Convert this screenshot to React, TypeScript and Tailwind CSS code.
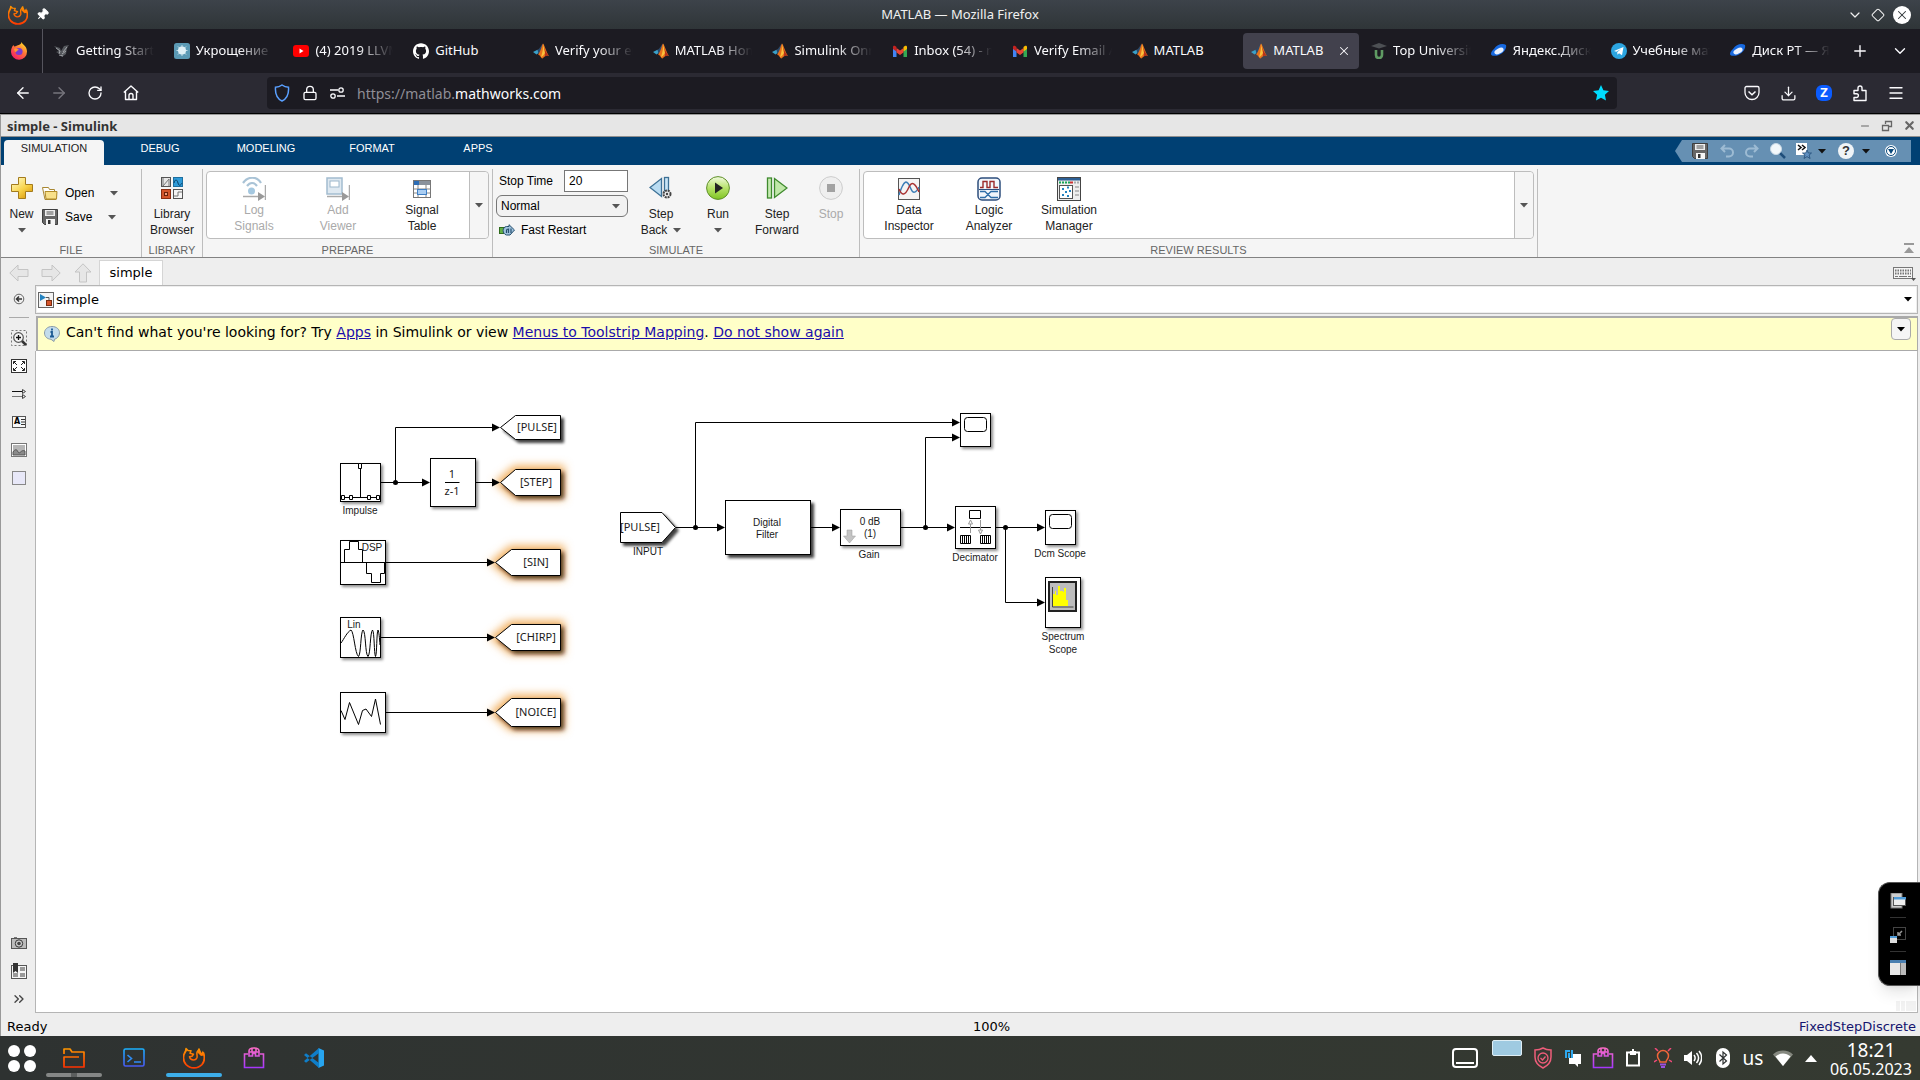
import React from "react";
import {
  ArrowLeft,
  ArrowRight,
  ChevronDown,
  ChevronsRight,
  Diamond,
  Download,
  Lock,
  Menu,
  Minus,
  Pin,
  Plus,
  RotateCw,
  Shield,
  X,
} from "lucide-react";
import { SiGithub } from "react-icons/si";

type P = { children?: React.ReactNode };

function Svg({ w, h, vb, children }: P & { w: number; h: number; vb?: string }) {
  return (
    <svg width={w} height={h} viewBox={vb ?? `0 0 ${w} ${h}`} fill="none" className="shrink-0" aria-hidden="true">
      {children}
    </svg>
  );
}

function Caret({ color = "#555" }: { color?: string }) {
  return (
    <Svg w={8} h={5}>
      <path d="M0 0h8L4 4.5z" fill={color} />
    </Svg>
  );
}

/* ---------- brand icons ---------- */

function MatlabIcon() {
  return (
    <Svg w={16} h={16}>
      <path d="M0 9l4.5-2.2L7 9 3.5 11.5z" fill="#3aa0c8" />
      <path d="M4.5 6.8C7 6 8 2 10 .5L8.500 8 5.500 11z" fill="#2c4a6b" />
      <path d="M10 .5C8.500 3 8 8 5 11.500c2 0 3 4 4.500 4 2-1 2.500-4 6.500-2.500C13.500 9.500 12 3 10 .5z" fill="#e8721c" />
      <path d="M10 .5C10.500 5 9.500 9 8 14c2.500-.5 3-3 4-4z" fill="#f9c23c" />
      <path d="M10.300 2c1.400 4 2.700 8 5.700 11-1.700-.8-3-.3-4 .5.500-4-.5-8-1.700-11.500z" fill="#b5301b" />
    </Svg>
  );
}

function FirefoxIcon() {
  return (
    <Svg w={18} h={20} vb="1 0 18 20">
      <defs>
        <linearGradient id="ffg" x1="16" y1="2" x2="4" y2="18" gradientUnits="userSpaceOnUse">
          <stop stopColor="#ffe226" />
          <stop offset=".45" stopColor="#ff7139" />
          <stop offset="1" stopColor="#f5156c" />
        </linearGradient>
      </defs>
      <path d="M12.500 1c1 3 5.500 4 5.500 9.500A8 8 0 0 1 2 11c0-3 1-5.500 2.500-7 .3 1 1 1.500 1.500 1.500C8 4 12 4.500 12.500 1z" fill="url(#ffg)" />
      <circle cx="10" cy="10.500" r="3.600" fill="#7a3bd0" />
      <path d="M5 8c2-1 4 0 5 1-2 0-2 2-4 2z" fill="#ff9a2e" />
    </Svg>
  );
}

function FoxOutline({ size }: { size: number }) {
  const id = `fox${size}`;
  return (
    <Svg w={size} h={size} vb="0 0 22 22">
      <defs>
        <linearGradient id={id} x1="11" y1="0" x2="11" y2="22" gradientUnits="userSpaceOnUse">
          <stop stopColor="#ff9a00" />
          <stop offset="1" stopColor="#ff3600" />
        </linearGradient>
      </defs>
      <path
        d="M3 3.500C0 8-.3 13.500 3 17.500c4 4.500 12 4.500 16 0 2.800-3.300 2.800-7.500 1.500-11.500"
        stroke={`url(#${id})`}
        strokeWidth="1.800"
        strokeLinecap="round"
      />
      <path
        d="M2.500 4.500L3 1.500l2 2 3 .2-1 2.500 3.500 1-1.500 2-2.500.6c.5 2 2 3.200 4 3.200s3-1 3.500-2.500c.5-1.800-.5-3 0-5 .4-1.600 1.800-2 2.200-4"
        stroke={`url(#${id})`}
        strokeWidth="1.500"
        strokeLinejoin="round"
      />
      <path d="M14.500 5.500l2-4 2 4.500 1.500-2.500 1 5-3 .5z" fill={`url(#${id})`} />
    </Svg>
  );
}

function BirdIcon() {
  return (
    <Svg w={16} h={16}>
      <path d="M0 3l6 2 1 3 3-5 5-1-2 3-1 6-4 3-2-3-4-2 3-1z" fill="#55585d" />
      <path d="M2 5l4 3-1 3M9 9l4-5M5 12l4 1M8 11l4-3" stroke="#b5b8bc" strokeWidth=".8" />
    </Svg>
  );
}

function HabrIcon() {
  return (
    <Svg w={16} h={16}>
      <rect width="16" height="16" rx="2.500" fill="#5b9ab5" />
      <circle cx="8" cy="7.500" r="4" fill="#dff0f6" />
      <path d="M8 2v11M2.500 7.500h11M4 3.500l8 8M12 3.500l-8 8" stroke="#dff0f6" strokeWidth=".8" />
    </Svg>
  );
}

function YoutubeIcon() {
  return (
    <Svg w={16} h={16}>
      <rect y="2" width="16" height="12" rx="3" fill="#f00" />
      <path d="M6.500 5.500v5l4-2.500z" fill="#fff" />
    </Svg>
  );
}

function GmailIcon() {
  return (
    <Svg w={16} h={16}>
      <path d="M1 14V4l3.500 2.500V14z" fill="#4285f4" />
      <path d="M11.500 14V6.500L15 4v10z" fill="#34a853" />
      <path d="M4.500 9.500V5L8 7.500 11.500 5v4.500L8 12z" fill="#ea4335" />
      <path d="M1 4c0-1.500 1.500-1.500 2.200-1l1.300 1v4.500L1 6z" fill="#c5221f" />
      <path d="M15 4c0-1.500-1.500-1.500-2.200-1l-1.300 1v4.500L15 6z" fill="#fbbc04" />
    </Svg>
  );
}

function UniIcon() {
  return (
    <Svg w={16} h={16}>
      <path d="M0 3l8-3 8 3-8 2.500z" fill="#4d5054" />
      <path d="M5 7v5c0 4 6 4 6 0V7" stroke="#5f9b63" strokeWidth="2.600" />
    </Svg>
  );
}

function DiskIcon() {
  return (
    <Svg w={16} h={16}>
      <path d="M3 6c3-5 9-6 12-4 1 3-2 8-7 10-4 1.500-8 1-8-1 0-2 1-3 3-5z" fill="#1769e0" />
      <ellipse cx="8" cy="8" rx="5" ry="2.600" transform="rotate(-28 8 8)" fill="#e8f1ff" />
    </Svg>
  );
}

function TelegramIcon() {
  return (
    <Svg w={16} h={16}>
      <circle cx="8" cy="8" r="8" fill="#2ca5e0" />
      <path d="M3 8l9.500-4L11 12.300 8 10.200l-1.500 1.500-.3-2.500L10 6 5.300 8.800z" fill="#fff" />
    </Svg>
  );
}

/* ---------- simulink toolstrip icons ---------- */

function SaveIcon() {
  return (
    <Svg w={16} h={16}>
      <path d="M.5.5h15v15h-13l-2-2z" fill="#666" stroke="#3f3f3f" />
      <path d="M3 1h10v6H3z" fill="#eee" />
      <path d="M4.500 3h7M4.500 5h7" stroke="#555" />
      <path d="M4 10h9v6H4z" fill="#f5f5f5" />
      <path d="M6 11h2.500v4H6z" fill="#333" />
    </Svg>
  );
}

function NewIcon() {
  return (
    <Svg w={22} h={22}>
      <defs>
        <linearGradient id="gold" x1="4" y1="2" x2="18" y2="20" gradientUnits="userSpaceOnUse">
          <stop stopColor="#fff6b8" />
          <stop offset=".55" stopColor="#f8d34a" />
          <stop offset="1" stopColor="#dc9c10" />
        </linearGradient>
      </defs>
      <path d="M7.500.5h7v7h7v7h-7v7h-7v-7h-7v-7h7z" fill="url(#gold)" stroke="#a37b1c" />
    </Svg>
  );
}

function FolderIcon() {
  return (
    <Svg w={16} h={14}>
      <path d="M.5 1.500h6l1 2h5v3h2l-.5 7h-11z" fill="#fff" stroke="#a88732" />
      <path d="M3 5.500h12l-.5 7.500H4z" fill="#f8e08a" stroke="#b18b2a" />
    </Svg>
  );
}

function LibraryIcon() {
  return (
    <Svg w={22} h={22}>
      <rect x=".5" y=".5" width="9" height="9" fill="#e6e6e6" stroke="#555" />
      <path d="M2 1v8l6-7v7" stroke="#777" />
      <rect x="12.500" y=".5" width="9" height="9" fill="#2f9bd8" stroke="#1d6fa0" />
      <path d="M13 6c1-4 3-4 4 0s3 2 4 0" stroke="#0b3f66" />
      <rect x=".5" y="12.500" width="9" height="9" fill="#d4552b" stroke="#8a2d12" />
      <rect x="3.500" y="15.500" width="3" height="3" fill="#f0a080" stroke="#6b1f08" />
      <rect x="12.500" y="12.500" width="9" height="9" fill="#f5f5f5" stroke="#555" />
      <path d="M13 19h4v-4h4" stroke="#777" />
    </Svg>
  );
}

function LogSignalsIcon() {
  return (
    <Svg w={24} h={24}>
      <path d="M1 6C6-1 15-1 19 6M5 9c3-4 7-4 10 0" stroke="#a9c3d6" strokeWidth="2.200" />
      <circle cx="9.500" cy="14" r="3.500" fill="#a5c8e0" />
      <path d="M1 19.500h16M23.500 8v15" stroke="#aaa" strokeWidth="1.500" />
      <path d="M16 15v9l7-4.500z" fill="#999" />
    </Svg>
  );
}

function AddViewerIcon() {
  return (
    <Svg w={24} h={24}>
      <rect x="1" y="1" width="15" height="16" fill="#dfe9f1" stroke="#a3bccf" strokeWidth="1.500" />
      <rect x="4" y="4" width="9" height="6" fill="#fff" stroke="#9db8cc" />
      <path d="M1 19.500h16M23.500 8v15" stroke="#aaa" strokeWidth="1.500" />
      <path d="M16 15v9l7-4.500z" fill="#999" />
    </Svg>
  );
}

function SignalTableIcon() {
  return (
    <Svg w={18} h={18}>
      <rect x=".5" y=".5" width="17" height="17" fill="#fff" stroke="#777" />
      <rect x="1" y="1" width="16" height="4" fill="#8a929c" />
      <rect x="1" y="1" width="5" height="4" fill="#2d6db5" />
      <path d="M1 9h16M1 13h16M5 5v12M13 5v12" stroke="#888" />
      <rect x="4.500" y="9.500" width="9" height="5" fill="#a9cdf2" stroke="#3f7fc4" />
    </Svg>
  );
}

function StepBackIcon() {
  return (
    <Svg w={24} h={24}>
      <path d="M12.500 2.500v18L1 11.500z" fill="#b9dcf2" stroke="#3d7196" strokeWidth="1.300" />
      <rect x="15.500" y="1.500" width="4" height="17" fill="#c9e5f7" stroke="#3d7196" strokeWidth="1.300" />
      <circle cx="18" cy="18" r="3.500" fill="#eee" stroke="#444" strokeWidth="2" strokeDasharray="2 .8" />
      <circle cx="18" cy="18" r="1.200" fill="#444" />
    </Svg>
  );
}

function RunIcon() {
  return (
    <Svg w={24} h={24}>
      <defs>
        <linearGradient id="rung" x1="12" y1="0" x2="12" y2="24" gradientUnits="userSpaceOnUse">
          <stop stopColor="#f4fbe6" />
          <stop offset=".5" stopColor="#b6e26a" />
          <stop offset="1" stopColor="#7cc21e" />
        </linearGradient>
      </defs>
      <circle cx="12" cy="12" r="11.400" fill="url(#rung)" stroke="#5f8f2a" />
      <path d="M9 6.500v11l8-5.500z" fill="#222" />
    </Svg>
  );
}

function StepForwardIcon() {
  return (
    <Svg w={22} h={24}>
      <rect x="1.500" y="2" width="4" height="20" fill="#c6ebb2" stroke="#3f8a2e" strokeWidth="1.300" />
      <path d="M8.500 2.500v19L21 12z" fill="#c0e8a8" stroke="#3f8a2e" strokeWidth="1.300" />
    </Svg>
  );
}

function StopIcon() {
  return (
    <Svg w={24} h={24}>
      <circle cx="12" cy="12" r="11.400" fill="#efefef" stroke="#ccc" />
      <rect x="8" y="8" width="8" height="8" fill="#a2a2a2" />
    </Svg>
  );
}

function FastRestartIcon() {
  return (
    <Svg w={16} h={12}>
      <rect x=".5" y="3.500" width="5" height="6" fill="#64b045" stroke="#2f6b1c" />
      <path d="M7.500 11C3 10 3 3 7.500 2.500H10V.7L15.500 6 11 11z" fill="#9fc2dd" stroke="#27506f" />
      <path d="M7.500 9V6.500C7.500 5 9 5 9.500 5v4M12 4.500V9" stroke="#27506f" strokeWidth="1.200" />
    </Svg>
  );
}

function DataInspectorIcon() {
  return (
    <Svg w={22} h={22}>
      <rect x=".5" y=".5" width="21" height="21" fill="#f4f4f4" stroke="#555" />
      <path d="M1 17C6 1 9 1 13 11c2 5 5 4 8-2" stroke="#3d7fb8" strokeWidth="1.500" />
      <path d="M1 11c3 7 6 7 10-2 3-6 6-4 10 5" stroke="#a83232" strokeWidth="1.500" />
    </Svg>
  );
}

function LogicIcon() {
  return (
    <Svg w={24} h={24}>
      <rect x="1" y="1" width="22" height="22" rx="4" fill="#f2f6fb" stroke="#2d4d7c" strokeWidth="1.500" />
      <path d="M3 10.500h3v-6h4v6h3v-6h4v6h4" stroke="#9c2b2b" strokeWidth="1.400" />
      <path d="M2 12.500h20" stroke="#2d4d7c" />
      <path d="M3 14.500h5l6 6h7M3 20.500h5l6-6h7" stroke="#2f6ea8" strokeWidth="1.300" />
    </Svg>
  );
}

function SimManagerIcon() {
  return (
    <Svg w={24} h={24}>
      <rect x=".5" y=".5" width="23" height="23" fill="#eee" stroke="#444" />
      <rect x="1" y="1" width="22" height="2.500" fill="#2d5f94" />
      <path d="M2 5.500h11" stroke="#18a558" strokeWidth="2" strokeDasharray="2 1" />
      <path d="M13 5.500h3" stroke="#c33" strokeWidth="2" />
      <path d="M17 5.500h5" stroke="#aaa" strokeWidth="2" strokeDasharray="2 1" />
      <rect x="2.500" y="8.500" width="13" height="13" fill="#fff" stroke="#555" />
      <path d="M5 12h2M10 10.500h2M8 15h2M12 14h2M5 18h2M10 19h2" stroke="#2382c0" strokeWidth="2" />
      <path d="M18 10h4M18 14h4M18 18h4" stroke="#888" />
    </Svg>
  );
}

/* ---------- browser ---------- */

const tabs: { t: string; i: React.ReactNode; fade?: boolean; active?: boolean }[] = [
  { t: "Getting Started", i: <BirdIcon />, fade: true },
  { t: "Укрощение", i: <HabrIcon />, fade: true },
  { t: "(4) 2019 LLVM", i: <YoutubeIcon />, fade: true },
  { t: "GitHub", i: <SiGithub size={16} color="#fff" /> },
  { t: "Verify your em", i: <MatlabIcon />, fade: true },
  { t: "MATLAB Home", i: <MatlabIcon />, fade: true },
  { t: "Simulink Onra", i: <MatlabIcon />, fade: true },
  { t: "Inbox (54) - ma", i: <GmailIcon />, fade: true },
  { t: "Verify Email A", i: <GmailIcon />, fade: true },
  { t: "MATLAB", i: <MatlabIcon /> },
  { t: "MATLAB", i: <MatlabIcon />, active: true },
  { t: "Top Universit", i: <UniIcon />, fade: true },
  { t: "Яндекс.Диск", i: <DiskIcon />, fade: true },
  { t: "Учебные мат", i: <TelegramIcon />, fade: true },
  { t: "Диск РТ — Ян", i: <DiskIcon />, fade: true },
];

function TitleBar() {
  return (
    <header className="flex h-[29px] items-center justify-between bg-linear-to-b from-[#3d434a] to-[#2f3538] px-2 text-[13px] text-[#f0f0f0]">
      <div className="flex w-24 items-center gap-2">
        <FoxOutline size={20} />
        <Pin size={13} fill="#fff" color="#fff" className="rotate-45" />
      </div>
      <h1>MATLAB — Mozilla Firefox</h1>
      <div className="flex w-24 items-center justify-end gap-2 pr-px">
        <button aria-label="Minimize"><ChevronDown size={16} strokeWidth={1.8} /></button>
        <button aria-label="Maximize"><Diamond size={14} strokeWidth={1.8} /></button>
        <button aria-label="Close" className="flex size-[18px] items-center justify-center rounded-full bg-white text-[#2f3538]">
          <X size={14} strokeWidth={1.8} />
        </button>
      </div>
    </header>
  );
}

function TabStrip() {
  return (
    <nav className="flex h-11 items-center bg-[#1c1b22] text-[13px] text-[#fbfbfe]">
      <button aria-label="Pinned tab" className="flex h-full w-[43px] items-center justify-center border-r border-[#55545d] pr-1">
        <FirefoxIcon />
      </button>
      <div className="flex min-w-0 flex-1 pl-[1px]">
        {tabs.map((tab, k) => (
          <div key={k} className="min-w-0 flex-1 px-[2px]">
            <div className={tab.active ? "flex h-9 items-center rounded bg-[#42414d] px-2" : "flex h-9 items-center px-2"}>
              <button className="flex min-w-0 items-center gap-1.5">
                {tab.i}
                <span
                  className={
                    tab.fade
                      ? "w-[78px] overflow-hidden whitespace-nowrap text-left [mask-image:linear-gradient(to_right,black_55%,transparent)]"
                      : "whitespace-nowrap"
                  }
                >
                  {tab.t}
                </span>
              </button>
              {tab.active && (
                <button aria-label="Close tab" className="ml-auto"><X size={14} strokeWidth={1.8} /></button>
              )}
            </div>
          </div>
        ))}
      </div>
      <button aria-label="New tab" className="flex w-10 justify-center"><Plus size={18} strokeWidth={1.8} /></button>
      <button aria-label="List tabs" className="flex w-10 justify-center"><ChevronDown size={18} strokeWidth={1.8} /></button>
    </nav>
  );
}

function NavBar() {
  return (
    <div className="flex h-[41px] items-center border-b border-black bg-[#2b2a33] text-[#fbfbfe]">
      <div className="flex w-[267px] items-center pl-[5px]">
        <button aria-label="Back" className="flex w-9 justify-center"><ArrowLeft size={18} strokeWidth={1.8} /></button>
        <button aria-label="Forward" className="flex w-9 justify-center text-[#77767e]"><ArrowRight size={18} strokeWidth={1.8} /></button>
        <button aria-label="Reload" className="flex w-9 justify-center"><RotateCw size={16} strokeWidth={2} /></button>
        <button aria-label="Home" className="flex w-9 justify-center">
          <Svg w={16} h={16}>
            <path d="M.8 7.500L8 1l7.200 6.500M2.500 6.500v8h11v-8" stroke="#fbfbfe" strokeWidth="1.400" strokeLinejoin="round" />
            <path d="M6 14.500v-4a2 2 0 0 1 4 0v4" stroke="#fbfbfe" strokeWidth="1.400" />
          </Svg>
        </button>
      </div>
      <div className="flex h-8 flex-1 items-center rounded bg-[#1c1b22] pl-[7px] pr-2 text-[14px]">
        <Svg w={16} h={18}>
          <path d="M8 1c2 1.500 4.500 2.200 6.500 2.200C15 9.500 13 14.500 8 17 3 14.500 1 9.500 1.500 3.200 3.500 3.200 6 2.500 8 1z" stroke="#5aa0ff" strokeWidth="1.500" />
        </Svg>
        <Lock size={16} strokeWidth={2} className="ml-3" />
        <span className="mx-3">
          <Svg w={15} h={12}>
            <path d="M0 3h8M7 9h8" stroke="#fbfbfe" strokeWidth="1.400" />
            <circle cx="11" cy="3" r="2.200" stroke="#fbfbfe" strokeWidth="1.300" />
            <circle cx="3" cy="9" r="2.200" stroke="#fbfbfe" strokeWidth="1.300" />
          </Svg>
        </span>
        <a href="#url" className="flex-1 text-[#fbfbfe]">
          <span className="text-[#8f8e96]">https://matlab.</span>mathworks.com
        </a>
        <button aria-label="Bookmark">
          <Svg w={16} h={16}>
            <path d="M8 0l2.400 5.200 5.600.7-4.100 3.900 1.100 5.700L8 12.700l-5 2.800 1.100-5.700L0 5.900l5.600-.7z" fill="#00ddff" />
          </Svg>
        </button>
      </div>
      <div className="flex w-[303px] items-center justify-end pr-1.5">
        <button aria-label="Pocket" className="flex w-9 justify-center">
          <Svg w={16} h={16}>
            <path d="M1 3c0-1 .7-1.500 1.500-1.500h11c.8 0 1.500.5 1.500 1.500v4.500a7 7 0 0 1-14 0z" stroke="#fbfbfe" strokeWidth="1.300" />
            <path d="M4.500 6.500L8 9.800l3.500-3.300" stroke="#fbfbfe" strokeWidth="1.500" />
          </Svg>
        </button>
        <button aria-label="Downloads" className="flex w-9 justify-center"><Download size={17} strokeWidth={1.8} /></button>
        <button aria-label="Zotero" className="flex w-9 justify-center">
          <span className="flex size-4 items-center justify-center rounded-md bg-[#0b5cff] text-[13px] font-bold">Z</span>
        </button>
        <button aria-label="Extensions" className="flex w-9 justify-center">
          <Svg w={16} h={17}>
            <path
              d="M2 8V5.500h4V3a2 2 0 0 1 4 0v2.500h4v10H2v-3h2.500a1.800 1.800 0 0 0 0-3.800H2z"
              stroke="#fbfbfe"
              strokeWidth="1.400"
              strokeLinejoin="round"
            />
          </Svg>
        </button>
        <button aria-label="Menu" className="flex w-9 justify-center"><Menu size={18} strokeWidth={1.8} /></button>
      </div>
    </div>
  );
}

/* ---------- toolstrip ---------- */

function Section({ title, className, children }: P & { title: string; className: string }) {
  return (
    <section className={`flex flex-col pt-1 ${className}`}>
      <div className="flex h-[73px] border-r border-[#bdbdbd]">{children}</div>
      <h3 className="h-[15px] border-r border-[#bdbdbd] text-center text-[11px] leading-4 text-[#666]">{title}</h3>
    </section>
  );
}

function GalleryItem({ icon, a, b, disabled, w }: { icon: React.ReactNode; a: string; b: string; disabled?: boolean; w: string }) {
  return (
    <button disabled={disabled} className={`flex flex-col items-center pt-1 ${w} ${disabled ? "text-[#aaa]" : "text-[#222]"}`}>
      <span className="flex h-[26px] items-center justify-center">{icon}</span>
      <span className="leading-4">{a}</span>
      <span className="leading-4">{b}</span>
    </button>
  );
}

function BigButton({ icon, a, b, disabled, w }: { icon: React.ReactNode; a: string; b?: React.ReactNode; disabled?: boolean; w: string }) {
  return (
    <button disabled={disabled} className={`flex flex-col items-center pt-[7px] ${w} ${disabled ? "text-[#aaa]" : "text-[#222]"}`}>
      <span className="mb-1.5 flex h-6 items-center">{icon}</span>
      <span className="leading-4">{a}</span>
      <span className="flex h-4 items-center gap-1.5 leading-4">{b}</span>
    </button>
  );
}

function QuickAccess() {
  return (
    <div className="mr-[9px] mt-[3px] flex h-[22px] w-[236px] items-center bg-[#6690b3] pl-[17px] [clip-path:polygon(7px_0,100%_0,100%_100%,7px_100%,0_50%)]">
      <button aria-label="Save"><SaveIcon /></button>
      <button aria-label="Undo" className="ml-3">
        <Svg w={14} h={14}>
          <path d="M5 1L1.500 4.500 5 8M2 4.500h7a3.500 3.500 0 0 1 0 8H6" stroke="#9dbbd3" strokeWidth="2" />
        </Svg>
      </button>
      <button aria-label="Redo" className="ml-[11px]">
        <Svg w={14} h={14}>
          <path d="M9 1l3.500 3.500L9 8M12 4.500H5a3.500 3.500 0 0 0 0 8h3" stroke="#9dbbd3" strokeWidth="2" />
        </Svg>
      </button>
      <button aria-label="Search" className="ml-[11px]">
        <Svg w={16} h={16}>
          <path d="M9 9l6 6" stroke="#1f4e7a" strokeWidth="2.500" />
          <circle cx="6" cy="6" r="5.500" fill="#f3f8fb" stroke="#c9d9e6" />
        </Svg>
      </button>
      <button aria-label="Favorites" className="ml-2.5 flex items-center gap-1.5">
        <Svg w={16} h={16}>
          <rect width="11" height="12" fill="#fff" />
          <path d="M2 2l3 2.500L2 7M6 2l3 2.500L6 7" stroke="#111" strokeWidth="1.500" />
          <path d="M11 7l1.300 3H15.500l-2.400 2 1 3.500L11 13.600 8 15.500l1-3.500-2.500-2h3.200z" fill="#5f8fc0" stroke="#234e78" strokeWidth=".8" />
        </Svg>
        <Caret color="#111" />
      </button>
      <button aria-label="Help" className="ml-3 flex items-center gap-2">
        <span className="flex size-4 items-center justify-center rounded-full bg-[#f0f4f7] text-[13px] font-bold text-[#333]">?</span>
        <Caret color="#111" />
      </button>
      <button aria-label="Minimize toolstrip" className="ml-[15px]">
        <Svg w={12} h={12}>
          <circle cx="6" cy="6" r="6" fill="#fff" />
          <circle cx="6" cy="6" r="4.500" fill="#fff" stroke="#0b4a7c" strokeWidth="1" />
          <path d="M3 4h6L6 9z" fill="#0b4a7c" />
        </Svg>
      </button>
    </div>
  );
}

function Toolstrip() {
  return (
    <div className="text-[12px]">
      <div className="flex h-7 items-start justify-between bg-[#004073]">
        <div role="tablist" className="flex pl-[3px] text-[11px]">
          <button role="tab" className="mr-[3px] mt-[3px] h-[25px] w-[100px] rounded-t-sm bg-[#f5f5f5] pb-2 text-[#222]">SIMULATION</button>
          {["DEBUG", "MODELING", "FORMAT", "APPS"].map((t) => (
            <button role="tab" key={t} className="mt-[3px] h-[25px] w-[106px] pb-2 text-white">
              {t}
            </button>
          ))}
        </div>
        <QuickAccess />
      </div>
      <div className="flex h-[93px] border-b border-[#828282] bg-[#f5f5f5]">
        <Section title="FILE" className="w-[141px]">
          <BigButton icon={<NewIcon />} a="New" b={<Caret />} w="w-[41px]" />
          <div className="flex flex-col pt-3">
            <button className="flex h-6 items-center"><span className="w-[23px]"><FolderIcon /></span><span className="w-[45px] text-left">Open</span><Caret /></button>
            <button className="flex h-6 items-center"><span className="w-[23px]"><SaveIcon /></span><span className="w-[43px] text-left">Save</span><Caret /></button>
          </div>
        </Section>
        <Section title="LIBRARY" className="w-[61px]">
          <BigButton icon={<LibraryIcon />} a="Library" b="Browser" w="w-full" />
        </Section>
        <Section title="PREPARE" className="w-[290px]">
          <div className="mx-[3px] mt-0.5 flex h-[68px] flex-1 rounded border border-[#bdbdbd] bg-white pl-[5px]">
            <GalleryItem icon={<LogSignalsIcon />} a="Log" b="Signals" disabled w="w-[84px]" />
            <GalleryItem icon={<AddViewerIcon />} a="Add" b="Viewer" disabled w="w-[84px]" />
            <GalleryItem icon={<SignalTableIcon />} a="Signal" b="Table" w="w-[84px]" />
            <button aria-label="More prepare tools" className="ml-auto flex w-[19px] items-center justify-center rounded-r border-l border-[#bdbdbd] bg-[#f5f5f5]"><Caret /></button>
          </div>
        </Section>
        <Section title="SIMULATE" className="w-[367px]">
          <div className="flex w-[135px] flex-col pl-[3px] pt-[1px]">
            <div className="flex items-center justify-between">
              <label htmlFor="stop" className="pl-[3px]">Stop Time</label>
              <input id="stop" defaultValue="20" className="h-[22px] w-16 border border-[#777] bg-white px-1 outline-none" />
            </div>
            <div className="relative mt-[3px]">
              <select aria-label="Simulation mode" className="h-[22px] w-full appearance-none rounded-md border border-[#777] bg-[#f2f2f2] px-1">
                <option>Normal</option>
              </select>
              <span className="pointer-events-none absolute right-2 top-[9px]"><Caret /></span>
            </div>
            <button className="mt-1 flex h-[18px] items-center gap-1.5 pl-[3px]"><FastRestartIcon />Fast Restart</button>
          </div>
          <BigButton icon={<StepBackIcon />} a="Step" b={<>Back<Caret /></>} w="w-[66px]" />
          <BigButton icon={<RunIcon />} a="Run" b={<Caret />} w="w-12" />
          <BigButton icon={<StepForwardIcon />} a="Step" b="Forward" w="w-[70px]" />
          <BigButton icon={<StopIcon />} a="Stop" disabled w="w-[38px]" />
        </Section>
        <Section title="REVIEW RESULTS" className="w-[678px]">
          <div className="mx-[3px] mt-0.5 flex h-[68px] flex-1 rounded border border-[#bdbdbd] bg-white pl-[5px]">
            <GalleryItem icon={<DataInspectorIcon />} a="Data" b="Inspector" w="w-20" />
            <GalleryItem icon={<LogicIcon />} a="Logic" b="Analyzer" w="w-20" />
            <GalleryItem icon={<SimManagerIcon />} a="Simulation" b="Manager" w="w-20" />
            <button aria-label="More result tools" className="ml-auto flex w-[19px] items-center justify-center rounded-r border-l border-[#bdbdbd] bg-[#f5f5f5]"><Caret /></button>
          </div>
        </Section>
        <div className="flex flex-1 items-end justify-end pb-1 pr-1.5">
          <button aria-label="Collapse toolstrip">
            <Svg w={10} h={10}>
              <path d="M0 1h10" stroke="#999" strokeWidth="2" />
              <path d="M0 10h10L5 4z" fill="#999" />
            </Svg>
          </button>
        </div>
      </div>
    </div>
  );
}

/* ---------- block diagram ---------- */

function Arrow({ x, y }: { x: number; y: number }) {
  return <path d={`M${x} ${y}l-8-4v8z`} fill="#000" />;
}

function Block({ x, y, w, h }: { x: number; y: number; w: number; h: number }) {
  return <rect x={x} y={y} width={w} height={h} fill="#fff" stroke="#000" filter="url(#shadow)" />;
}

function GotoTag({ x, y, h, label, glow }: { x: number; y: number; h: number; label: string; glow?: boolean }) {
  const s = x > 498 ? 15 : 16;
  const d = `M${x} ${y + h / 2}L${x + s} ${y}H560.500V${y + h}H${x + s}z`;
  return (
    <g>
      {glow && <path d={d} fill="#f2b060" stroke="#f2b060" strokeWidth="8" filter="url(#glow)" />}
      <path d={d} fill="#fff" stroke="#000" filter={glow ? "url(#shadow3)" : "url(#shadow2)"} />
      <text
        x={label === "[PULSE]" ? 537 : 536}
        y={Math.round(y + h / 2 + 3)}
        fill="#1a1a1a"
        textAnchor="middle"
        className="[font-family:'Noto_Sans',sans-serif] text-[11px]"
      >
        {label}
      </text>
    </g>
  );
}

function ScopeFace({ x, y, h }: { x: number; y: number; h: number }) {
  return (
    <g>
      <Block x={x} y={y} w={30} h={h} />
      <rect x={x + 4} y={y + 4} width="22" height="14" rx="3" stroke="#000" fill="#fff" />
    </g>
  );
}

function Diagram() {
  return (
    <svg width="1100" height="440" viewBox="36 351 1100 440" fill="none" role="img" aria-label="Block diagram" className="[font-family:'Liberation_Sans',sans-serif] text-[10px]">
      <defs>
        <filter id="shadow" x="-30%" y="-30%" width="160%" height="160%">
          <feDropShadow dx="2" dy="2" stdDeviation="1.500" floodColor="#000" floodOpacity=".45" />
        </filter>
        <filter id="shadow2" x="-30%" y="-50%" width="160%" height="200%">
          <feDropShadow dx="3" dy="3" stdDeviation="1.500" floodColor="#000" floodOpacity=".75" />
        </filter>
        <filter id="shadow3" x="-30%" y="-50%" width="160%" height="200%">
          <feDropShadow dx="3" dy="3" stdDeviation="2" floodColor="#2a1500" floodOpacity=".75" />
        </filter>
        <filter id="glow" x="-30%" y="-60%" width="160%" height="220%">
          <feGaussianBlur stdDeviation="4" />
        </filter>
      </defs>

      <GotoTag x={500.5} y={415.5} h={24} label="[PULSE]" />
      <GotoTag x={500.5} y={469.5} h={26} label="[STEP]" glow />
      <GotoTag x={495.5} y={549.5} h={26} label="[SIN]" glow />
      <GotoTag x={495.5} y={624.5} h={26} label="[CHIRP]" glow />
      <GotoTag x={495.5} y={698.5} h={28} label="[NOICE]" glow />

      <g stroke="#000">
        <path d="M381 482.500h43M395.500 482.500v-55H494M476 482.500h18M386 562.500h104M381 637.500h109M386 712.500h104" />
        <path d="M676 527.500h43M695.500 527.500v-105H954M811 527.500h22M901 527.500h48M925.500 527.500v-90H954M996 527.500h43M1005.500 527.500v75H1039" />
      </g>
      <g fill="#000">
        <circle cx="395.500" cy="482.500" r="2.500" />
        <circle cx="695.500" cy="527.500" r="2.500" />
        <circle cx="925.500" cy="527.500" r="2.500" />
        <circle cx="1005.500" cy="527.500" r="2.500" />
      </g>
      <Arrow x={430} y={482.5} />
      <Arrow x={500} y={427.5} />
      <Arrow x={500} y={482.5} />
      <Arrow x={495} y={562.5} />
      <Arrow x={495} y={637.5} />
      <Arrow x={495} y={712.5} />
      <Arrow x={725} y={527.5} />
      <Arrow x={840} y={527.5} />
      <Arrow x={955} y={527.5} />
      <Arrow x={960} y={422.5} />
      <Arrow x={960} y={437.5} />
      <Arrow x={1045} y={527.5} />
      <Arrow x={1045} y={602.5} />

      <Block x={340.5} y={463.5} w={40} h={38} />
      <path d="M360.500 468v29.500M345 497.500h31" stroke="#000" />
      <path d="M358.500 463.500h3v5h-3zM341.500 495.500h3v4h-3zM349.500 495.500h3v4h-3zM367.500 495.500h3v4h-3zM376.500 495.500h3v4h-3z" stroke="#000" fill="#fff" />
      <Block x={430.5} y={458.5} w={45} h={48} />
      <path d="M445 482.500h14.500" stroke="#000" />
      <Block x={340.5} y={540.5} w={45} h={44} />
      <path d="M341 562.500h44M344.500 562.500v-13h5v-8h9v8h4v13M366.500 562.500v11h5v9h9v-9h4v-11" stroke="#000" />
      <Block x={340.5} y={617.5} w={40} h={40} />
      <path d="M341 643c3-4 6-11 10-13 3 2 4 24 7.500 26.500 2.500-2 2-24 4.500-26.500 3 2 2 24 5 26.500 2.500-2 2-24 4.500-26.500 2 2 1.500 24 3 26.500 1.500-2 1-24 2.500-26.500 1 2 1.500 8 2 15" stroke="#000" />
      <Block x={340.5} y={692.5} w={45} h={40} />
      <path d="M341 710.500l4 9 4.500-17 9 22 4-14 3.500-1.500 5.500 7.500 4-17.500 5 25.500" stroke="#000" />

      <path d="M620.500 512.500H662l13.500 15-13.500 15h-41.500z" fill="#fff" stroke="#000" filter="url(#shadow2)" />
      <rect x="725.500" y="500.500" width="85" height="54" fill="#fff" stroke="#000" filter="url(#shadow2)" />
      <Block x={840.5} y={509.5} w={60} h={36} />
      <path d="M847 530h5v6h3.500l-6 7-6-7h3.500z" fill="#c4c4c4" stroke="#999" strokeWidth=".5" />
      <Block x={955.5} y={506.5} w={40} h={42} />
      <path d="M969.500 510.500h11v8h-11zM960 527.500h31" stroke="#000" />
      <path d="M960.500 535.500h10v8h-10zM980.500 535.500h10v8h-10zM962.500 535.500v8M964.500 535.500v8M966.500 535.500v8M968.500 535.500v8M982.500 535.500v8M984.500 535.500v8M986.500 535.500v8M988.500 535.500v8" stroke="#000" />
      <path d="M970.500 533v-9M968.500 524l2-4 2 4zM980.500 520v10M978.500 530l2 4 2-4z" stroke="#999" />
      <ScopeFace x={960.5} y={413.5} h={33} />
      <ScopeFace x={1045.5} y={510.5} h={34} />
      <Block x={1045.5} y={577.5} w={35} h={50} />
      <rect x="1049" y="582" width="27" height="29" fill="#bdbdbd" stroke="#222" strokeWidth="2" />
      <path d="M1053 606v-12h2v-3h1v4h2v-9h2v5h3v1h1v-4h2v12h2v6z" fill="#ff0" />
      <path d="M1052.500 587v20h21" stroke="#444" />

      <g fill="#1a1a1a" textAnchor="middle">
        <g className="[font-family:'Noto_Sans',sans-serif] text-[11px]">
          <text x="640" y="531">[PULSE]</text>
          <text x="452" y="478">1</text>
          <text x="452" y="495">z-1</text>
        </g>
        <text x="360" y="514">Impulse</text>
        <text x="372" y="551">DSP</text>
        <text x="354" y="628">Lin</text>
        <text x="648" y="555">INPUT</text>
        <text x="767" y="526">Digital</text>
        <text x="767" y="538">Filter</text>
        <text x="870" y="525">0 dB</text>
        <text x="870" y="537">(1)</text>
        <text x="869" y="558">Gain</text>
        <text x="975" y="561">Decimator</text>
        <text x="1060" y="557">Dcm Scope</text>
        <text x="1063" y="640">Spectrum</text>
        <text x="1063" y="653">Scope</text>
      </g>
    </svg>
  );
}

/* ---------- editor ---------- */

function NavArrow({ label, rotate }: { label: string; rotate: string }) {
  return (
    <button aria-label={label} className={rotate}>
      <Svg w={20} h={18}>
        <path d="M.8 9L9 1v4.500h10v7H9V17z" fill="#e6e6e6" stroke="#c4c4c4" />
      </Svg>
    </button>
  );
}

function PaletteButton({ label, children }: P & { label: string }) {
  return (
    <button aria-label={label} className="flex h-7 w-full items-center justify-center">
      {children}
    </button>
  );
}

function Palette() {
  return (
    <aside className="flex w-[34px] flex-col pl-0.5">
      <PaletteButton label="Hide browser">
        <Svg w={12} h={12}>
          <circle cx="6" cy="6" r="4.800" stroke="#666" />
          <path d="M9 6H4M6 3.500L3.500 6 6 8.500" stroke="#333" strokeWidth="1.500" />
        </Svg>
      </PaletteButton>
      <div className="mx-1.5 mb-1.5 mt-1 h-px bg-[#aaa]" />
      <PaletteButton label="Zoom">
        <Svg w={16} h={16}>
          <rect x=".5" y=".5" width="15" height="15" stroke="#777" strokeDasharray="2 2" />
          <path d="M10 10l5 5" stroke="#333" strokeWidth="2.500" />
          <circle cx="7.500" cy="7.500" r="4.800" fill="#f5f5f5" stroke="#555" strokeWidth="1.200" />
          <path d="M7.500 5v5M5 7.500h5" stroke="#111" strokeWidth="1.300" />
        </Svg>
      </PaletteButton>
      <PaletteButton label="Fit to view">
        <Svg w={16} h={14}>
          <rect x=".5" y=".5" width="15" height="13" fill="#fff" stroke="#333" />
          <path d="M2.500 5V2.500H5M3 3l3 3M11 2.500h2.500V5M13 3l-3 3M2.500 9v2.500H5M3 11l3-3M11 11.500h2.500V9M13 11l-3-3" stroke="#222" />
        </Svg>
      </PaletteButton>
      <PaletteButton label="Signal lines">
        <Svg w={14} h={10}>
          <path d="M0 2.500h11" stroke="#111" />
          <path d="M0 7.500h11" stroke="#777" />
          <path d="M10.500.5l3 2-3 2zM10.500 5.500l3 2-3 2z" stroke="#444" />
        </Svg>
      </PaletteButton>
      <PaletteButton label="Annotation">
        <span className="flex h-3 w-3.5 items-center gap-px border border-[#555] bg-[#f8f8f8] px-px text-[8px] font-bold leading-none text-black">
          A
          <Svg w={4} h={6}>
            <path d="M0 .5h4M0 3h4M0 5.500h4" stroke="#333" />
          </Svg>
        </span>
      </PaletteButton>
      <PaletteButton label="Image">
        <Svg w={16} h={14}>
          <rect x=".5" y=".5" width="15" height="13" fill="#fff" stroke="#777" />
          <rect x="2" y="2" width="12" height="10" fill="#b5b5b5" />
          <path d="M2 9c2-3 4-3 5 0 2 3 3-3 7-1v4H2z" fill="#8a8a8a" stroke="#555" />
        </Svg>
      </PaletteButton>
      <PaletteButton label="Area">
        <span className="size-3.5 border border-[#888] bg-[#e8e8f8]" />
      </PaletteButton>
      <div className="flex-1" />
      <PaletteButton label="Screenshot">
        <Svg w={16} h={12}>
          <path d="M3 0h3v2H3z" fill="#777" />
          <rect x=".5" y="1.500" width="15" height="10" fill="#bbb" stroke="#555" />
          <circle cx="8" cy="6.500" r="3.700" fill="#ccc" stroke="#333" />
          <circle cx="8" cy="6.500" r="1.800" fill="#444" />
        </Svg>
      </PaletteButton>
      <PaletteButton label="Bookmarks">
        <Svg w={16} h={16}>
          <rect x=".5" y="2.500" width="15" height="13" fill="#f5f5f5" stroke="#555" />
          <path d="M9 4h5v4H9zM9 10h5v4H9zM2 10h5v4H2z" fill="#999" />
          <path d="M2 0h5v10L4.500 8 2 10z" fill="#333" />
        </Svg>
      </PaletteButton>
      <PaletteButton label="More"><ChevronsRight size={16} strokeWidth={2} color="#444" /></PaletteButton>
    </aside>
  );
}

function FloatingPanel() {
  return (
    <div className="absolute bottom-[26px] right-[-3px] flex h-[104px] w-[42px] flex-col items-center justify-between rounded-l-xl border border-r-0 border-[#555] bg-black py-2.5 pr-1 shadow-lg">
      <button aria-label="Cascade windows">
        <Svg w={16} h={16}>
          <rect x="1" y="0" width="11" height="15" fill="#ccc" stroke="#777" />
          <rect x="3.500" y="4.500" width="12" height="8" fill="#eee" stroke="#555" />
          <rect x="4" y="4" width="12" height="2.500" fill="#4f9bd8" />
        </Svg>
      </button>
      <div className="h-px w-4 bg-[#333]" />
      <button aria-label="Dock window">
        <Svg w={16} h={16}>
          <rect x="3.500" y=".5" width="12" height="12" stroke="#888" strokeDasharray="1 1" />
          <path d="M12 4L8 8M8 5v3h3" stroke="#999" strokeWidth="1.500" />
          <rect x="0" y="9" width="7" height="7" fill="#ddd" />
          <rect x="0" y="9" width="7" height="2" fill="#4f9bd8" />
        </Svg>
      </button>
      <div className="h-px w-4 bg-[#333]" />
      <button aria-label="Tile windows">
        <Svg w={16} h={15}>
          <rect width="16" height="15" fill="#e8e8e8" />
          <rect width="16" height="3" fill="#4a7fb0" />
          <path d="M10.500 3v12" stroke="#777" />
          <rect x="11" y="3" width="5" height="12" fill="#bbb" />
        </Svg>
      </button>
    </div>
  );
}

function Editor() {
  return (
    <div className="flex min-h-0 flex-1 flex-col bg-[#eee] text-[13px] text-black [font-family:'DejaVu_Sans',sans-serif]">
      <div className="flex h-[27px] items-center justify-between pr-1">
        <div className="flex h-full items-center pl-2 pt-0.5">
          <div className="flex gap-3 pr-1.5">
            <NavArrow label="Back" rotate="" />
            <NavArrow label="Forward" rotate="rotate-180" />
            <NavArrow label="Up" rotate="rotate-90" />
          </div>
          <button className="h-[25px] w-16 border border-b-0 border-[#d5d5d5] bg-white">simple</button>
        </div>
        <button aria-label="Keyboard shortcuts" className="flex items-end pt-1">
          <Svg w={23} h={14}>
            <rect x=".5" y=".5" width="19" height="11" fill="#f4f4f4" stroke="#777" />
            <path d="M2 3.500h16M2 6.500h16" stroke="#777" strokeWidth="2" strokeDasharray="1.500 1" />
            <path d="M2 9.500h3M6 9.500h8M15 9.500h3" stroke="#777" />
            <path d="M18 11h5l-2.500 3z" fill="#555" />
          </Svg>
        </button>
      </div>
      <div className="flex min-h-0 flex-1">
        <Palette />
        <div className="flex min-w-0 flex-1 flex-col pr-0.5">
          <div className="mb-0.5 flex h-[29px] items-center border-2 border-[#eee] bg-white pl-px pr-1 outline-1 -outline-offset-1 outline-[#b5b5b5]">
            <Svg w={16} h={16}>
              <rect x=".5" y=".5" width="15" height="15" fill="#f4f4f4" stroke="#666" />
              <path d="M2 2l6 3.500L2 9z" fill="#2382c0" />
              <path d="M8 5.500h3V8" stroke="#555" />
              <rect x="8.500" y="8.500" width="5" height="5" fill="#d4552b" stroke="#7a2b10" />
            </Svg>
            <span className="flex-1 pl-0.5">simple</span>
            <button aria-label="Path list"><Caret color="#000" /></button>
          </div>
          <div className="ml-px flex h-[35px] items-start border border-l-2 border-t-2 border-[#aaa] bg-[#ffffc8] pl-1.5 pr-1.5 text-[14px]">
            <span className="pt-2">
              <Svg w={16} h={16}>
                <path d="M8 .5c4.500 0 7.500 2.700 7.500 6.300S12.500 13 10.500 13.200L10 15.500 7 13.300C3 13 .5 10.500.5 7S3.500.5 8 .5z" fill="#c3dcec" stroke="#8a9ba8" />
                <path d="M8 2.500v2M6.500 6H8v4.500M6 10.500h4" stroke="#1c5a94" strokeWidth="1.800" />
              </Svg>
            </span>
            <p className="flex-1 pl-1.5 pt-1 leading-5">
              Can't find what you're looking for? Try <a href="#apps" className="text-[#1a0dab] underline">Apps</a> in Simulink or view{" "}
              <a href="#menus" className="text-[#1a0dab] underline">Menus to Toolstrip Mapping</a>. <a href="#hide" className="text-[#1a0dab] underline">Do not show again</a>
            </p>
            <button aria-label="Notification options" className="flex h-[22px] w-5 items-center justify-center rounded-sm border border-[#aaa] bg-[#f5f5f5]"><Caret color="#000" /></button>
          </div>
          <main className="relative min-h-0 flex-1 border border-t-0 border-[#b5b5b5] bg-white">
            <Diagram />
            <div className="absolute bottom-px right-px flex gap-px">
              <span className="h-2.5 w-1 bg-[#f2f2f2]" />
              <span className="h-2.5 w-1 bg-[#f2f2f2]" />
              <span className="h-2.5 w-2.5 bg-[#f2f2f2]" />
            </div>
            <FloatingPanel />
          </main>
        </div>
      </div>
      <footer className="grid h-[23px] grid-cols-3 items-center pl-1.5 pr-1 pt-1">
        <span>Ready</span>
        <span className="pl-15 text-center">100%</span>
        <span className="text-right text-[#14146e]">FixedStepDiscrete</span>
      </footer>
    </div>
  );
}

/* ---------- desktop panel ---------- */

function BagIcon({ id }: { id: string }) {
  return (
    <Svg w={22} h={22}>
      <defs>
        <linearGradient id={id} x1="11" y1="0" x2="11" y2="22" gradientUnits="userSpaceOnUse">
          <stop stopColor="#ff6ec4" />
          <stop offset="1" stopColor="#a033ff" />
        </linearGradient>
      </defs>
      <path d="M5 7H1.500v13.500h19V7H17M6 9V4c0-4 10-4 10 0v5h-3.500V6.500h-3V9zM6 5h10M9 1.500V5M13 1.500V5" stroke={`url(#${id})`} strokeWidth="1.600" />
    </Svg>
  );
}

function Task({ label, bar, children }: P & { label: string; bar: string }) {
  return (
    <button aria-label={label} className="flex h-full w-14 flex-col items-center">
      <span className="flex flex-1 items-center pt-1.5">{children}</span>
      <span className={`mb-[3px] h-1 w-full rounded-full ${bar}`} />
    </button>
  );
}

function Tray({ label, children }: P & { label: string }) {
  return (
    <button aria-label={label} className="flex w-[30px] justify-center">
      {children}
    </button>
  );
}

function Taskbar() {
  return (
    <div className="flex h-11 items-center justify-between bg-linear-to-r from-[#2e3231] to-[#353a31] pl-2 text-white">
      <div className="flex h-full items-center gap-1">
        <button aria-label="Applications" className="mr-1.5 grid grid-cols-2 gap-x-1 gap-y-[3px]">
          <span className="size-3 rounded-full bg-white" />
          <span className="size-3 rounded-full bg-white" />
          <span className="size-3 rounded-full bg-white" />
          <span className="size-3 rounded-full bg-white" />
        </button>
        <Task label="Files" bar="bg-[linear-gradient(to_right,#858786_45%,#5c5f5e_45%,#5c5f5e_55%,#858786_55%)]">
          <Svg w={22} h={20}>
            <defs>
              <linearGradient id="fold" x1="11" y1="0" x2="11" y2="20" gradientUnits="userSpaceOnUse">
                <stop stopColor="#ff9a00" />
                <stop offset="1" stopColor="#ff2d00" />
              </linearGradient>
            </defs>
            <path d="M1 6V1h6l2 3h12v15H1V9h15" stroke="url(#fold)" strokeWidth="1.700" strokeLinejoin="round" />
          </Svg>
        </Task>
        <Task label="Terminal" bar="bg-transparent">
          <Svg w={22} h={20}>
            <defs>
              <linearGradient id="term" x1="11" y1="0" x2="11" y2="20" gradientUnits="userSpaceOnUse">
                <stop stopColor="#18b4ff" />
                <stop offset="1" stopColor="#4b52f0" />
              </linearGradient>
            </defs>
            <rect x="1" y="1" width="20" height="17" rx="1.500" stroke="url(#term)" strokeWidth="1.600" />
            <path d="M4.500 7l4 3.500-4 3.500M11 14h7" stroke="#2f8df5" strokeWidth="1.600" />
          </Svg>
        </Task>
        <Task label="Firefox" bar="bg-[#3daee9]"><FoxOutline size={22} /></Task>
        <Task label="Store" bar="bg-transparent"><BagIcon id="bag1" /></Task>
        <Task label="Code editor" bar="bg-transparent">
          <Svg w={20} h={20}>
            <path d="M14.500 0L20 2.500v15L14.500 20z" fill="#27a5f0" />
            <path d="M0 7l2-1.800L15 15v5zM0 13l2 1.800L15 5V0z" fill="#0f7ec9" />
          </Svg>
        </Task>
      </div>
      <div className="flex h-full items-center">
        <button aria-label="Show desktop" className="mr-3.5">
          <Svg w={26} h={20}>
            <rect x="1" y="1" width="24" height="18" rx="3" stroke="#fff" strokeWidth="2" />
            <path d="M4 15h18" stroke="#fff" strokeWidth="2" />
          </Svg>
        </button>
        <button aria-label="Pager" className="mb-5 mr-1.5 h-4 w-[30px] rounded-[2px] border border-[#dfeef5] bg-[#9fcae1]" />
        <Tray label="Security">
          <Svg w={18} h={22}>
            <path d="M9 1c3 1.800 5 2 8 2v7c0 5-3 8.500-8 11-5-2.500-8-6-8-11V3c3 0 5-.2 8-2z" stroke="#ee5d7a" strokeWidth="1.500" />
            <circle cx="9" cy="11" r="5" stroke="#ee5d7a" strokeWidth="1.300" />
            <path d="M6.500 11l2 2 3-3.500" stroke="#ee5d7a" strokeWidth="1.300" />
          </Svg>
        </Tray>
        <Tray label="Updates">
          <Svg w={16} h={17}>
            <path d="M4 4h12v10h-3v3l-3-3H4z" fill="#fff" />
            <path d="M0 0h8v8H0z" fill="#353a31" />
            <path d="M0 0h5v2H2v6H0zM3 3h2v5H3zM6 0h2v8H6z" fill="#2fa8ee" />
          </Svg>
        </Tray>
        <Tray label="Store"><BagIcon id="bag2" /></Tray>
        <Tray label="Clipboard">
          <Svg w={16} h={18}>
            <path d="M2 3.500h12v13H2z" stroke="#fff" strokeWidth="2" />
            <path d="M5 2h2V0h2v2h2v4H5z" fill="#fff" />
          </Svg>
        </Tray>
        <Tray label="Hints">
          <Svg w={18} h={20}>
            <path d="M6 14c0-2-2.500-3-2.500-6a5.500 5.500 0 0 1 11 0c0 3-2.500 4-2.500 6z" stroke="#f0653a" strokeWidth="1.500" />
            <path d="M1 0l3 3M17 0l-3 3M0 14l3-2M18 14l-3-2" stroke="#f04a7a" strokeWidth="1.500" />
            <path d="M6 16.500h6M7 19h4" stroke="#9b4fe0" strokeWidth="2" />
          </Svg>
        </Tray>
        <Tray label="Volume">
          <Svg w={18} h={16}>
            <path d="M0 5h3l5-4v14L3 11H0z" fill="#fff" />
            <path d="M10 5c1.500 2 1.500 4 0 6M12.500 3c2.500 3 2.500 7 0 10M15 1c3.500 4 3.500 10 0 14" stroke="#fff" strokeWidth="1.500" />
          </Svg>
        </Tray>
        <Tray label="Bluetooth">
          <Svg w={14} h={20}>
            <rect width="14" height="20" rx="7" fill="#fff" />
            <path d="M3.500 6.500l7 6.500L7 16V4l3.500 3-7 6.500" stroke="#2e3231" strokeWidth="1.200" />
          </Svg>
        </Tray>
        <button className="flex w-[30px] justify-center text-[19px]">us</button>
        <Tray label="Network">
          <Svg w={20} h={16}>
            <path d="M0 4.500C5-1 15-1 20 4.500L10 16z" fill="#85887f" />
            <path d="M2.500 6.500c4.500-4 10.500-4 15 0L10 16z" fill="#fff" />
          </Svg>
        </Tray>
        <button aria-label="Hidden icons" className="flex w-[26px] justify-center">
          <Svg w={12} h={7}>
            <path d="M0 7h12L6 0z" fill="#fff" />
          </Svg>
        </button>
        <div className="flex w-24 flex-col items-center pr-0.5">
          <time className="text-[19px] leading-[22px]">18:21</time>
          <span className="text-[16px] leading-4">06.05.2023</span>
        </div>
      </div>
    </div>
  );
}

export default function App() {
  return (
    <div className="flex h-screen flex-col overflow-hidden [font-family:'Noto_Sans',sans-serif]">
      <TitleBar />
      <TabStrip />
      <NavBar />
      <div className="flex min-h-0 flex-1 flex-col border-l border-t border-[#999] [font-family:'Liberation_Sans',sans-serif]">
        <div className="flex h-[22px] items-center justify-between border-b border-[#8f8f8f] bg-[#e6e6e6] pl-1.5 pr-1 text-[#333]">
          <h2 className="text-[13px] font-bold leading-5 [font-family:'Noto_Sans',sans-serif]">simple - Simulink</h2>
          <div className="flex items-center gap-2.5 text-[#666]">
            <button aria-label="Minimize window"><Minus size={12} strokeWidth={2} /></button>
            <button aria-label="Restore window">
              <Svg w={12} h={12}>
                <path d="M4.500 4V1.500h6v5H8M1.500 5.500h6v5h-6z" stroke="#666" strokeWidth="1.300" />
              </Svg>
            </button>
            <button aria-label="Close window"><X size={13} strokeWidth={4} /></button>
          </div>
        </div>
        <Toolstrip />
        <Editor />
      </div>
      <Taskbar />
    </div>
  );
}
